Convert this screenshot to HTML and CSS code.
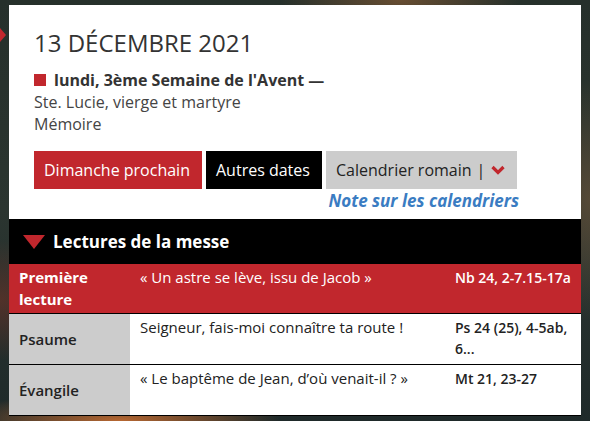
FILE: index.html
```html
<!DOCTYPE html>
<html lang="fr">
<head>
<meta charset="utf-8">
<link rel="stylesheet" href="styles.css">
</head>
<body>
<div class="page">
  <span class="side-arrow"></span>
  <div class="card">
    <div class="head">
      <h1 class="date">13 DÉCEMBRE 2021</h1>
      <p class="season"><span class="sq"></span>lundi, 3ème Semaine de l'Avent —</p>
      <p class="saint">Ste. Lucie, vierge et martyre</p>
      <p class="saint">Mémoire</p>
      <div class="actions">
        <a class="btn btn-red">Dimanche prochain</a>
        <a class="btn btn-black">Autres dates</a>
        <div class="cal">
          <a class="btn btn-gray">Calendrier romain <span class="bar">|</span>
            <svg class="chev" width="14" height="10" viewBox="0 0 14 10"><path d="M1.5 2 L7 7.5 L12.5 2" fill="none" stroke="#c1272d" stroke-width="3.2"/></svg>
          </a>
          <a class="note">Note sur les calendriers</a>
        </div>
      </div>
    </div>
    <div class="section">
      <svg class="tri" width="22" height="14" viewBox="0 0 22 14"><path d="M0 0 H22 L11 14 Z" fill="#c1272d"/></svg>
      <span>Lectures de la messe</span>
    </div>
    <div class="readings">
      <div class="row row-red">
        <div class="lab">Première lecture</div>
        <div class="txt">« Un astre se lève, issu de Jacob »</div>
        <div class="ref">Nb 24, 2-7.15-17a</div>
      </div>
      <div class="row">
        <div class="lab lab-gray">Psaume</div>
        <div class="txt">Seigneur, fais-moi connaître ta route !</div>
        <div class="ref">Ps 24 (25), 4-5ab, 6...</div>
      </div>
      <div class="row">
        <div class="lab lab-gray">Évangile</div>
        <div class="txt">« Le baptême de Jean, d’où venait-il ? »</div>
        <div class="ref">Mt 21, 23-27</div>
      </div>
    </div>
  </div>
</div>
</body>
</html>
```
FILE: styles.css
```css
html, body {
  margin: 0;
  padding: 0;
  height: 100%;
}
body {
  font-family: "Open Sans", "DejaVu Sans", sans-serif;
  color: #333;
  overflow: hidden;
  background:
    radial-gradient(ellipse 160px 30px at 120px 421px, rgba(200,110,50,0.9), rgba(200,110,50,0) 100%),
    radial-gradient(ellipse 120px 40px at 400px 0px, rgba(110,80,50,0.9), rgba(110,80,50,0) 100%),
    radial-gradient(ellipse 60px 120px at 590px 200px, rgba(90,75,55,0.9), rgba(90,75,55,0) 100%),
    radial-gradient(ellipse 80px 60px at 0px 300px, rgba(100,50,40,0.7), rgba(100,50,40,0) 100%),
    linear-gradient(180deg, #26302b 0%, #2b3530 50%, #1f2a2a 100%);
}
.page {
  position: relative;
  padding: 5px 9px 0 9px;
}
.side-arrow {
  position: absolute;
  left: 0;
  top: 28px;
  width: 0;
  height: 0;
  border-top: 7px solid transparent;
  border-bottom: 7px solid transparent;
  border-left: 6px solid #c1272d;
}
.card {
  width: 572px;
  background: #fff;
}
.head {
  padding: 22px 0 0 25px;
}
.date {
  margin: 0;
  font-size: 24px;
  font-weight: 400;
  line-height: 32px;
  color: #333;
  letter-spacing: 0;
}
.season {
  margin: 10px 0 0 0;
  font-size: 16px;
  font-weight: 700;
  line-height: 22px;
  color: #333;
  display: flex;
  align-items: center;
}
.sq {
  display: inline-block;
  width: 12px;
  height: 12px;
  background: #c1272d;
  margin-right: 8px;
}
.saint {
  margin: 0;
  font-size: 16px;
  line-height: 22px;
  color: #444;
}
.actions {
  display: flex;
  gap: 4px;
  margin-top: 16px;
  align-items: flex-start;
}
.btn {
  display: flex;
  align-items: center;
  height: 38px;
  padding: 0 10px;
  font-size: 16px;
  box-sizing: border-box;
}
.btn-red {
  background: #c1272d;
  color: #fff;
  width: 168px;
}
.btn-black {
  background: #000;
  color: #fff;
  width: 116px;
}
.cal {
  display: flex;
  flex-direction: column;
  align-items: flex-end;
}
.btn-gray {
  background: #cccccc;
  color: #222;
  width: 191px;
}
.bar {
  margin: 0 6px 0 5px;
  color: #222;
}
.chev {
  display: block;
}
.note {
  font-size: 17px;
  font-weight: 700;
  font-style: italic;
  color: #3a7cc2;
  line-height: 22px;
  margin-top: 1px;
  margin-right: -2px;
}
.section {
  margin-top: 7px;
  height: 45px;
  background: #000;
  color: #fff;
  display: flex;
  align-items: center;
  padding-left: 14px;
  font-size: 17px;
  font-weight: 700;
}
.tri {
  margin-right: 8px;
}
.readings {
  display: flex;
  flex-direction: column;
}
.row {
  display: grid;
  grid-template-columns: 121px 315px 136px;
  height: 50px;
  border-bottom: 1px solid #000;
  font-size: 15px;
  line-height: 21px;
  color: #222;
}
.row-red {
  background: #c1272d;
  color: #fff;
  height: 49px;
}
.lab {
  padding: 2px 10px 0 10px;
  font-weight: 700;
  font-size: 15px;
  line-height: 22px;
}
.lab-gray {
  background: #cccccc;
  font-weight: 600;
  display: flex;
  align-items: center;
  padding-top: 0;
}
.txt {
  padding: 3px 10px 0 10px;
}
.ref {
  padding: 3px 10px 0 10px;
  font-weight: 600;
  font-size: 14px;
}
```
